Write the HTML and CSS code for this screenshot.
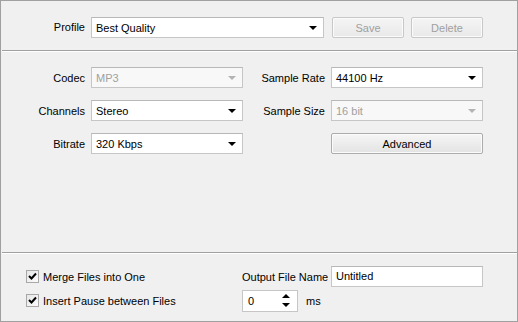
FILE: index.html
```html
<!DOCTYPE html>
<html lang="en">

<head>
    <meta charset="UTF-8" />
    <title>Audio Settings</title>
    <link rel="stylesheet" href="styles.css">
</head>

<body>
    <div class="window">
        <div class="profile-bar">
            <span class="label">Profile</span>
            <div class="select profile-select">
                <span>Best Quality</span>
                <i class="arrow"></i>
            </div>
            <button class="btn small" disabled>Save</button>
            <button class="btn small" disabled>Delete</button>
        </div>

        <div class="sep"></div>

        <div class="settings">
            <span class="label">Codec</span>
            <div class="select disabled"><span>MP3</span><i class="arrow"></i></div>
            <span class="label">Sample Rate</span>
            <div class="select"><span>44100 Hz</span><i class="arrow"></i></div>

            <span class="label">Channels</span>
            <div class="select"><span>Stereo</span><i class="arrow"></i></div>
            <span class="label">Sample Size</span>
            <div class="select disabled"><span>16 bit</span><i class="arrow"></i></div>

            <span class="label">Bitrate</span>
            <div class="select"><span>320 Kbps</span><i class="arrow"></i></div>
            <span></span>
            <button class="btn">Advanced</button>
        </div>

        <div class="sep"></div>

        <div class="output">
            <label class="check">
                <span class="box">
                    <svg width="9" height="9" viewBox="0 0 9 9"><path d="M1 4 L3.5 6.5 L8 1.5" fill="none" stroke="#000" stroke-width="2"/></svg>
                </span>
                Merge Files into One
            </label>
            <span class="out-label">Output File Name</span>
            <div class="field">Untitled</div>

            <label class="check">
                <span class="box">
                    <svg width="9" height="9" viewBox="0 0 9 9"><path d="M1 4 L3.5 6.5 L8 1.5" fill="none" stroke="#000" stroke-width="2"/></svg>
                </span>
                Insert Pause between Files
            </label>
            <div class="pause">
                <div class="spin">
                    <span>0</span>
                    <span class="spin-arrows">
                        <i class="up"></i>
                        <i class="down"></i>
                    </span>
                </div>
                <span>ms</span>
            </div>
        </div>
    </div>
</body>

</html>
```

FILE: styles.css
```css
body {
    margin: 0;
    font-family: "Liberation Sans", Arial, sans-serif;
    font-size: 11px;
    color: #000;
}

.window {
    width: 518px;
    height: 322px;
    box-sizing: border-box;
    border: 1px solid #a0a0a0;
    background: #f0f0f0;
    display: flex;
    flex-direction: column;
}

.sep {
    height: 0;
    border-top: 1px solid #a0a0a0;
    border-bottom: 1px solid #fff;
    margin-left: 1px;
}

.label {
    text-align: right;
    padding-right: 6px;
}

/* top bar */
.profile-bar {
    height: 49px;
    box-sizing: border-box;
    padding-top: 16px;
    display: flex;
    align-items: flex-start;
}

.profile-bar .label {
    width: 90px;
    line-height: 21px;
    box-sizing: border-box;
}

.profile-select {
    width: 233px;
    margin-right: 8px;
}

.btn {
    height: 21px;
    padding: 0;
    font: inherit;
    color: #000;
    border: 1px solid #acacac;
    border-radius: 2px;
    background: linear-gradient(#f6f6f6, #e3e3e3);
    box-shadow: inset 0 0 0 1px #fbfbfb;
}

.btn:disabled {
    color: #a0a0a0;
    border-color: #c8c8c8;
    background: linear-gradient(#f4f4f4, #e9e9e9);
}

.btn.small {
    width: 72px;
    margin-right: 7px;
}

/* select boxes */
.select {
    height: 21px;
    box-sizing: border-box;
    border: 1px solid #c6c6c6;
    border-top-color: #b8b8b8;
    background: #fff;
    display: flex;
    align-items: center;
    justify-content: space-between;
    padding: 0 6px 0 4px;
}

.select.disabled {
    color: #a0a0a0;
    background: #f8f8f8;
}

.arrow {
    width: 0;
    height: 0;
    border-left: 4px solid transparent;
    border-right: 4px solid transparent;
    border-top: 4px solid #000;
    margin-top: 1px;
}

.select.disabled .arrow {
    border-top-color: #b4b4b4;
}

/* middle settings */
.settings {
    flex: 1;
    display: grid;
    grid-template-columns: 90px 152px 88px 152px;
    grid-auto-rows: 21px;
    row-gap: 12px;
    align-content: start;
    align-items: center;
    padding: 15px 0 0 0;
}

/* bottom */
.output {
    height: 67px;
    box-sizing: border-box;
    padding: 12px 0 0 25px;
    display: grid;
    grid-template-columns: 216px 89px 152px;
    grid-template-rows: 21px 21px;
    row-gap: 3px;
    align-items: center;
}

.check {
    display: flex;
    align-items: center;
    gap: 4px;
}

.box {
    width: 13px;
    height: 13px;
    box-sizing: border-box;
    border: 1px solid #a8a8a8;
    background: linear-gradient(135deg, #e6e6e6, #fbfbfb);
    display: flex;
    align-items: center;
    justify-content: center;
}

.field {
    height: 21px;
    box-sizing: border-box;
    border: 1px solid #c6c6c6;
    border-top-color: #b8b8b8;
    background: #fff;
    padding: 0 4px;
    line-height: 19px;
}

.pause {
    grid-column: 2 / 4;
    display: flex;
    align-items: center;
    gap: 8px;
}

.spin {
    width: 56px;
    height: 22px;
    box-sizing: border-box;
    border: 1px solid #c6c6c6;
    background: #fff;
    display: flex;
    align-items: center;
    justify-content: space-between;
    padding: 0 7px 0 5px;
}

.spin-arrows {
    display: flex;
    flex-direction: column;
    gap: 5px;
}

.up,
.down {
    width: 0;
    height: 0;
    border-left: 4px solid transparent;
    border-right: 4px solid transparent;
}

.up {
    border-bottom: 4px solid #000;
}

.down {
    border-top: 4px solid #000;
}
```
